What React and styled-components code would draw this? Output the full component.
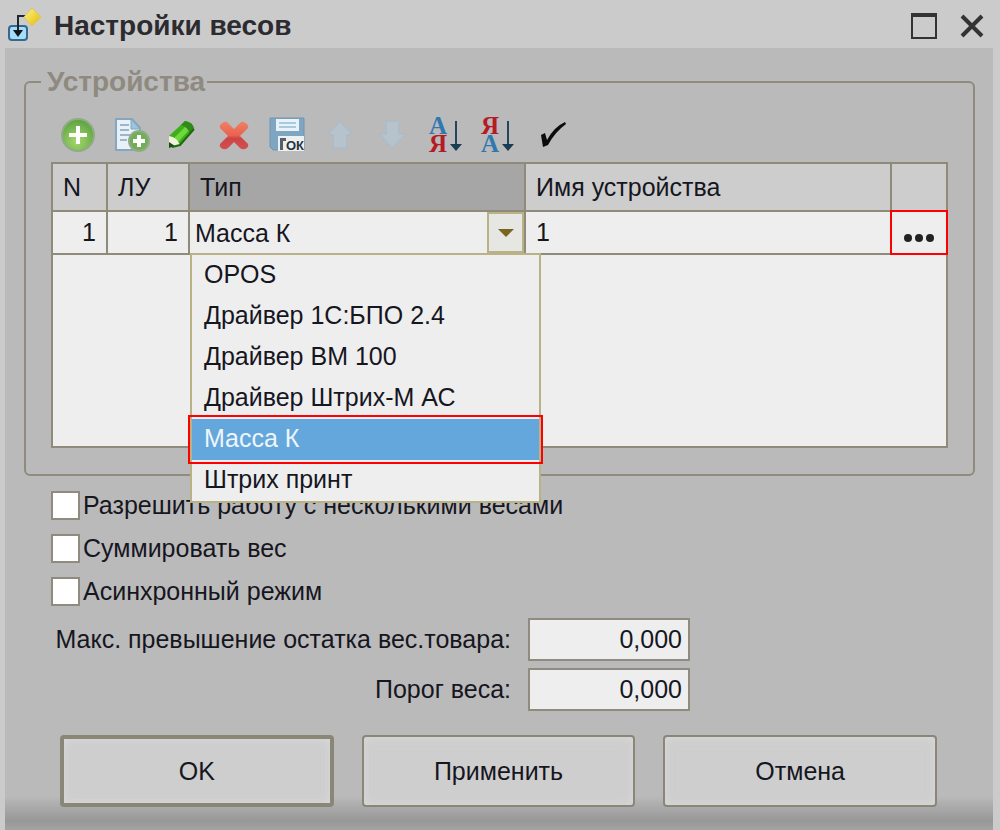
import React, { useState } from "react";
import styled, { createGlobalStyle } from "styled-components";

const GlobalStyle = createGlobalStyle`
  * {
    box-sizing: border-box;
  }
  body {
    margin: 0;
    background: #bababa;
  }
  body,
  button,
  input,
  select {
    font-family: "Liberation Sans", Arial, sans-serif;
    font-size: 25px;
    color: #16161f;
  }
`;

const Window = styled.div`
  min-height: 100vh;
  display: flex;
  flex-direction: column;
  background: #cbcbcb;
`;

const TitleBar = styled.header`
  display: flex;
  align-items: center;
  height: 48px;
  padding: 4px 12px 0 6px;

  h1 {
    flex: 1;
    margin: 0 0 0 12px;
    font-size: 28px;
    line-height: 32px;
    color: #2b2b30;
  }
`;

const WindowButton = styled.button`
  display: flex;
  align-items: center;
  justify-content: center;
  width: 32px;
  height: 32px;
  margin-left: 16px;
  padding: 0;
  border: none;
  background: none;
`;

const Body = styled.main`
  flex: 1;
  margin: 0 7px 0 5px;
  padding: 20px 18px 23px 19px;
  background: linear-gradient(
    to top,
    #a4a4a4 0,
    #979797 9px,
    #a6a6a6 20px,
    #bababa 34px
  );
`;

const Group = styled.fieldset`
  margin: 0;
  padding: 0 25px 26px;
  border: 2px solid #8f8b7e;
  border-radius: 6px;
  min-width: 0;

  legend {
    margin-left: -10px;
    padding: 0 2px 0 6px;
    font-size: 28px;
    font-weight: bold;
    line-height: 28px;
    color: #8f8a80;
  }
`;

const Toolbar = styled.div`
  display: flex;
  padding: 20px 1px 8px;
`;

const ToolButton = styled.button`
  display: flex;
  align-items: center;
  justify-content: center;
  width: 52px;
  height: 38px;
  padding: 0;
  border: none;
  background: none;

  svg {
    overflow: visible;
  }
  &:disabled {
    opacity: 0.45;
  }
`;

const GridBox = styled.div`
  min-height: 286px;
  border: 2px solid #8f8b7a;
  background: #eeeeee;
`;

const Table = styled.table`
  width: 100%;
  table-layout: fixed;
  border-spacing: 0;

  th,
  td {
    padding: 0 10px;
    border-right: 2px solid #8f8b7a;
    border-bottom: 2px solid #8f8b7a;
    text-align: left;
    font-weight: normal;
  }
  th:last-child,
  td:last-child {
    border-right: none;
  }
  th {
    height: 48px;
    background: #cdcdcd;
  }
  td {
    height: 43px;
  }
`;

const HeadCell = styled.th`
  width: ${(p) => p.$width || "auto"};
  && {
    background: ${(p) => (p.$active ? "#a6a6a6" : "#cdcdcd")};
  }
`;

const NumberCell = styled.td`
  && {
    text-align: right;
  }
`;

const FlushCell = styled.td`
  && {
    padding: 0;
  }
`;

const Combo = styled.div`
  position: relative;
  display: flex;
  height: 41px;

  select {
    flex: 1;
    min-width: 0;
    padding: 0 5px;
    border: none;
    background: none;
    appearance: none;
    outline: none;
  }
`;

const ComboArrow = styled.button`
  display: flex;
  align-items: center;
  justify-content: center;
  width: 37px;
  padding: 0;
  border: 2px solid #b9b286;
  background: #e6e6e2;
`;

const List = styled.ul`
  position: absolute;
  top: 100%;
  left: 0;
  right: -17px;
  z-index: 1;
  margin: 0;
  padding: 0;
  list-style: none;
  border: 2px solid #b9b286;
  background: #eeeeee;
`;

const Option = styled.li`
  height: 41px;
  padding: 0 12px;
  line-height: 38px;
  white-space: nowrap;
  cursor: default;
  color: ${(p) => (p.$selected ? "#eef5fb" : "inherit")};
  background: ${(p) => (p.$selected ? "#64a7dc" : "transparent")};
  outline: ${(p) => (p.$selected ? "2px solid #ff0000" : "none")};
  outline-offset: 2px;
`;

const MoreButton = styled.button`
  display: flex;
  align-items: center;
  justify-content: center;
  width: 100%;
  height: 41px;
  padding: 10px 0 0;
  border: none;
  background: none;
  outline: 2px solid #ff0000;
`;

const Checks = styled.div`
  display: flex;
  flex-direction: column;
  gap: 13px;
  padding: 14px 27px 0;
`;

const CheckRow = styled.label`
  display: flex;
  align-items: center;
  gap: 3px;
  line-height: 30px;

  input {
    appearance: none;
    width: 29px;
    height: 29px;
    margin: 0;
    border: 2px solid #8f8b7e;
    background: #ffffff;
  }
  input:checked {
    box-shadow: inset 0 0 0 6px #ffffff;
    background: #2b2b30;
  }
`;

const Fields = styled.div`
  display: grid;
  grid-template-columns: 460px 162px;
  column-gap: 17px;
  row-gap: 7px;
  align-items: center;
  padding: 12px 27px 0;

  label {
    justify-self: end;
    white-space: nowrap;
  }
  input {
    width: 100%;
    height: 43px;
    padding: 0 6px;
    border: 2px solid #8f8b7e;
    border-radius: 0;
    background: #eeeeee;
    text-align: right;
  }
`;

const Footer = styled.footer`
  display: grid;
  grid-template-columns: repeat(3, 1fr);
  gap: 28px;
  padding: 24px 38px 0 36px;
`;

const Button = styled.button`
  height: 72px;
  border: ${(p) => (p.$primary ? "4px" : "2px")} solid #8a8678;
  border-radius: 4px;
  background: #cecece;
  box-shadow: inset 0 0 8px rgba(224, 224, 224, 0.7);
`;

const AppIcon = () => (
  <svg width="36" height="36" viewBox="0 0 36 36">
    <defs>
      <linearGradient id="gold" x1="0" y1="0" x2="1" y2="1">
        <stop offset="0" stopColor="#fff58a" />
        <stop offset="1" stopColor="#e3b900" />
      </linearGradient>
    </defs>
    <rect x="3" y="18" width="18" height="14" rx="3" fill="#a5dcf8" stroke="#35688e" strokeWidth="2" />
    <path d="M20 8h-8v16" fill="none" stroke="#20252b" strokeWidth="2" />
    <path d="M7 22h10l-5 7z" fill="#10161c" />
    <path d="M26 0l9 9-9 9-8-9z" fill="url(#gold)" stroke="#dcc45c" />
  </svg>
);

const AddIcon = () => (
  <svg width="38" height="38" viewBox="0 0 38 38">
    <defs>
      <radialGradient id="green" cx="0.45" cy="0.7" r="0.7">
        <stop offset="0" stopColor="#a4d86c" />
        <stop offset="1" stopColor="#5ca142" />
      </radialGradient>
    </defs>
    <circle cx="19" cy="19" r="16" fill="url(#green)" stroke="#8fac83" strokeWidth="2" />
    <path d="M19 10v18M10 19h18" stroke="#fff" strokeWidth="4" />
  </svg>
);

const CopyIcon = () => (
  <svg width="38" height="38" viewBox="0 0 38 38">
    <path d="M5 3h16l8 9v22H5z" fill="#e8f1f8" stroke="#85a6bf" strokeWidth="2" />
    <path d="M20 3v10h9z" fill="#9cc3df" stroke="#85a6bf" />
    <path d="M9 9h9M9 14h9M9 19h13M9 24h7" stroke="#9db6ca" strokeWidth="2" />
    <circle cx="28" cy="25" r="10" fill="#72ad58" stroke="#8fac83" strokeWidth="2" />
    <path d="M28 19v12M22 25h12" stroke="#fff" strokeWidth="4" />
  </svg>
);

const PencilIcon = () => (
  <svg width="38" height="38" viewBox="0 0 38 38">
    <path d="M6 20L22 5q8 1 9 8L17 29 6 32z" fill="#3fae1c" />
    <path d="M11 22L24 9l4 3-13 14z" fill="#6fd83c" />
    <path d="M22 5q8 1 9 8l-4 5q-2-7-9-9z" fill="#2f8a18" />
    <path d="M6 20q8 1 11 9l-11 3z" fill="#f0f2dc" />
    <path d="M6 26l6 4-6 2z" fill="#164f10" />
    <path d="M9 31l8-2 14-16" fill="none" stroke="#1f6a12" strokeWidth="2" />
  </svg>
);

const DeleteIcon = () => (
  <svg width="38" height="38" viewBox="0 0 38 38">
    <defs>
      <linearGradient id="red" x1="0" y1="0" x2="0" y2="1">
        <stop offset="0" stopColor="#f08068" />
        <stop offset="0.5" stopColor="#e8624e" />
        <stop offset="0.6" stopColor="#cf4444" />
        <stop offset="1" stopColor="#d25050" />
      </linearGradient>
    </defs>
    <path
      d="M5 12q-1-2 1-4l3-2q2-1 4 1l6 6 6-6q2-2 4-1l3 2q2 2 1 4l-8 8 8 8q1 2-1 4l-2 1q-3 1-5-1l-6-6-6 6q-2 2-5 1l-2-1q-2-2-1-4l8-8z"
      fill="url(#red)"
    />
  </svg>
);

const SaveIcon = () => (
  <svg width="38" height="38" viewBox="0 0 38 38">
    <path d="M3 2h34v32H6l-3-3z" fill="#7ea6c2" stroke="#7295b0" />
    <path d="M9 3h23v12H9z" fill="#e8f2f8" />
    <path d="M12 7h17M12 11h17" stroke="#a9cbe0" strokeWidth="2" />
    <path d="M11 20h26v15H11z" fill="#edf0f1" />
    <path d="M13 22h6v3h-3v9h-3z" fill="#52616d" />
    <text x="19" y="34" fontFamily="Liberation Sans" fontWeight="bold" fontSize="13" fill="#29333c">
      ОК
    </text>
  </svg>
);

const MoveIcon = ({ down }) => (
  <svg width="38" height="38" viewBox="0 0 38 38">
    <path
      d={down ? "M15 5h13v13h7L21 32 8 18h7z" : "M21 5l13 14h-6v13H14V19H8z"}
      fill="#b5d0e2"
      stroke="#a4c0d4"
      strokeWidth="2"
      strokeLinejoin="round"
    />
  </svg>
);

const SortIcon = ({ desc }) => (
  <svg width="38" height="38" viewBox="0 0 38 38">
    <g fontFamily="Liberation Serif" fontWeight="bold" fontSize="25" textAnchor="middle">
      <text x="15" y="18" fill={desc ? "#b51b24" : "#2f78b0"}>
        {desc ? "Я" : "А"}
      </text>
      <text x="15" y="36" fill={desc ? "#2f78b0" : "#b51b24"}>
        {desc ? "А" : "Я"}
      </text>
    </g>
    <path d="M33 5v24" stroke="#24465a" strokeWidth="2" />
    <path d="M27 28h12l-6 7z" fill="#193d52" />
  </svg>
);

const CheckIcon = () => (
  <svg width="38" height="38" viewBox="0 0 38 38">
    <path d="M14 19l4-2 2 7Q27 11 38 6l1 2Q28 16 21 29l-5 2z" fill="#0c0c0c" />
  </svg>
);

const tools = [
  { title: "Добавить", icon: <AddIcon /> },
  { title: "Скопировать", icon: <CopyIcon /> },
  { title: "Изменить", icon: <PencilIcon /> },
  { title: "Удалить", icon: <DeleteIcon /> },
  { title: "Записать", icon: <SaveIcon /> },
  { title: "Вверх", icon: <MoveIcon />, disabled: true },
  { title: "Вниз", icon: <MoveIcon down />, disabled: true },
  { title: "По возрастанию", icon: <SortIcon /> },
  { title: "По убыванию", icon: <SortIcon desc /> },
  { title: "Проверить", icon: <CheckIcon /> },
];

const types = [
  "OPOS",
  "Драйвер 1С:БПО 2.4",
  "Драйвер ВМ 100",
  "Драйвер Штрих-М АС",
  "Масса К",
  "Штрих принт",
];

const checks = [
  "Разрешить работу с несколькими весами",
  "Суммировать вес",
  "Асинхронный режим",
];

const ScaleSettings = () => {
  const [type, setType] = useState("Масса К");
  const [open, setOpen] = useState(true);

  const pick = (value) => {
    setType(value);
    setOpen(false);
  };

  return (
    <Window>
      <GlobalStyle />
      <TitleBar>
        <AppIcon />
        <h1>Настройки весов</h1>
        <WindowButton aria-label="Развернуть">
          <svg width="26" height="26" viewBox="0 0 26 26">
            <path d="M1 2h24v23H1z" fill="none" stroke="#333" strokeWidth="2" />
            <path d="M0 2h26" stroke="#333" strokeWidth="4" />
          </svg>
        </WindowButton>
        <WindowButton aria-label="Закрыть">
          <svg width="26" height="26" viewBox="0 0 26 26">
            <path d="M3 3l20 20M23 3L3 23" stroke="#333" strokeWidth="4" />
          </svg>
        </WindowButton>
      </TitleBar>

      <Body>
        <Group>
          <legend>Устройства</legend>
          <Toolbar>
            {tools.map((tool) => (
              <ToolButton key={tool.title} aria-label={tool.title} disabled={tool.disabled}>
                {tool.icon}
              </ToolButton>
            ))}
          </Toolbar>
          <GridBox>
            <Table>
              <thead>
                <tr>
                  <HeadCell $width="55px">N</HeadCell>
                  <HeadCell $width="82px">ЛУ</HeadCell>
                  <HeadCell $width="336px" $active>
                    Тип
                  </HeadCell>
                  <HeadCell>Имя устройства</HeadCell>
                  <HeadCell $width="54px" />
                </tr>
              </thead>
              <tbody>
                <tr>
                  <NumberCell>1</NumberCell>
                  <NumberCell>1</NumberCell>
                  <FlushCell>
                    <Combo>
                      <select
                        aria-label="Тип"
                        value={type}
                        onChange={(e) => setType(e.target.value)}
                      >
                        {types.map((t) => (
                          <option key={t}>{t}</option>
                        ))}
                      </select>
                      <ComboArrow aria-label="Список" onClick={() => setOpen(!open)}>
                        <svg width="16" height="8" viewBox="0 0 16 8">
                          <path d="M0 0h16L8 8z" fill="#7a6420" />
                        </svg>
                      </ComboArrow>
                      {open && (
                        <List role="listbox" aria-label="Тип">
                          {types.map((t) => (
                            <Option
                              key={t}
                              role="option"
                              aria-selected={t === type}
                              $selected={t === type}
                              onClick={() => pick(t)}
                            >
                              {t}
                            </Option>
                          ))}
                        </List>
                      )}
                    </Combo>
                  </FlushCell>
                  <td>1</td>
                  <FlushCell>
                    <MoreButton aria-label="Параметры">
                      <svg width="30" height="8" viewBox="0 0 30 8">
                        <circle cx="4" cy="4" r="4" fill="#222" />
                        <circle cx="15" cy="4" r="4" fill="#222" />
                        <circle cx="26" cy="4" r="4" fill="#222" />
                      </svg>
                    </MoreButton>
                  </FlushCell>
                </tr>
              </tbody>
            </Table>
          </GridBox>
        </Group>

        <Checks>
          {checks.map((text) => (
            <CheckRow key={text}>
              <input type="checkbox" />
              {text}
            </CheckRow>
          ))}
        </Checks>

        <Fields>
          <label htmlFor="excess">Макс. превышение остатка вес.товара:</label>
          <input id="excess" defaultValue="0,000" />
          <label htmlFor="threshold">Порог веса:</label>
          <input id="threshold" defaultValue="0,000" />
        </Fields>

        <Footer>
          <Button $primary>OK</Button>
          <Button>Применить</Button>
          <Button>Отмена</Button>
        </Footer>
      </Body>
    </Window>
  );
};

export default ScaleSettings;
